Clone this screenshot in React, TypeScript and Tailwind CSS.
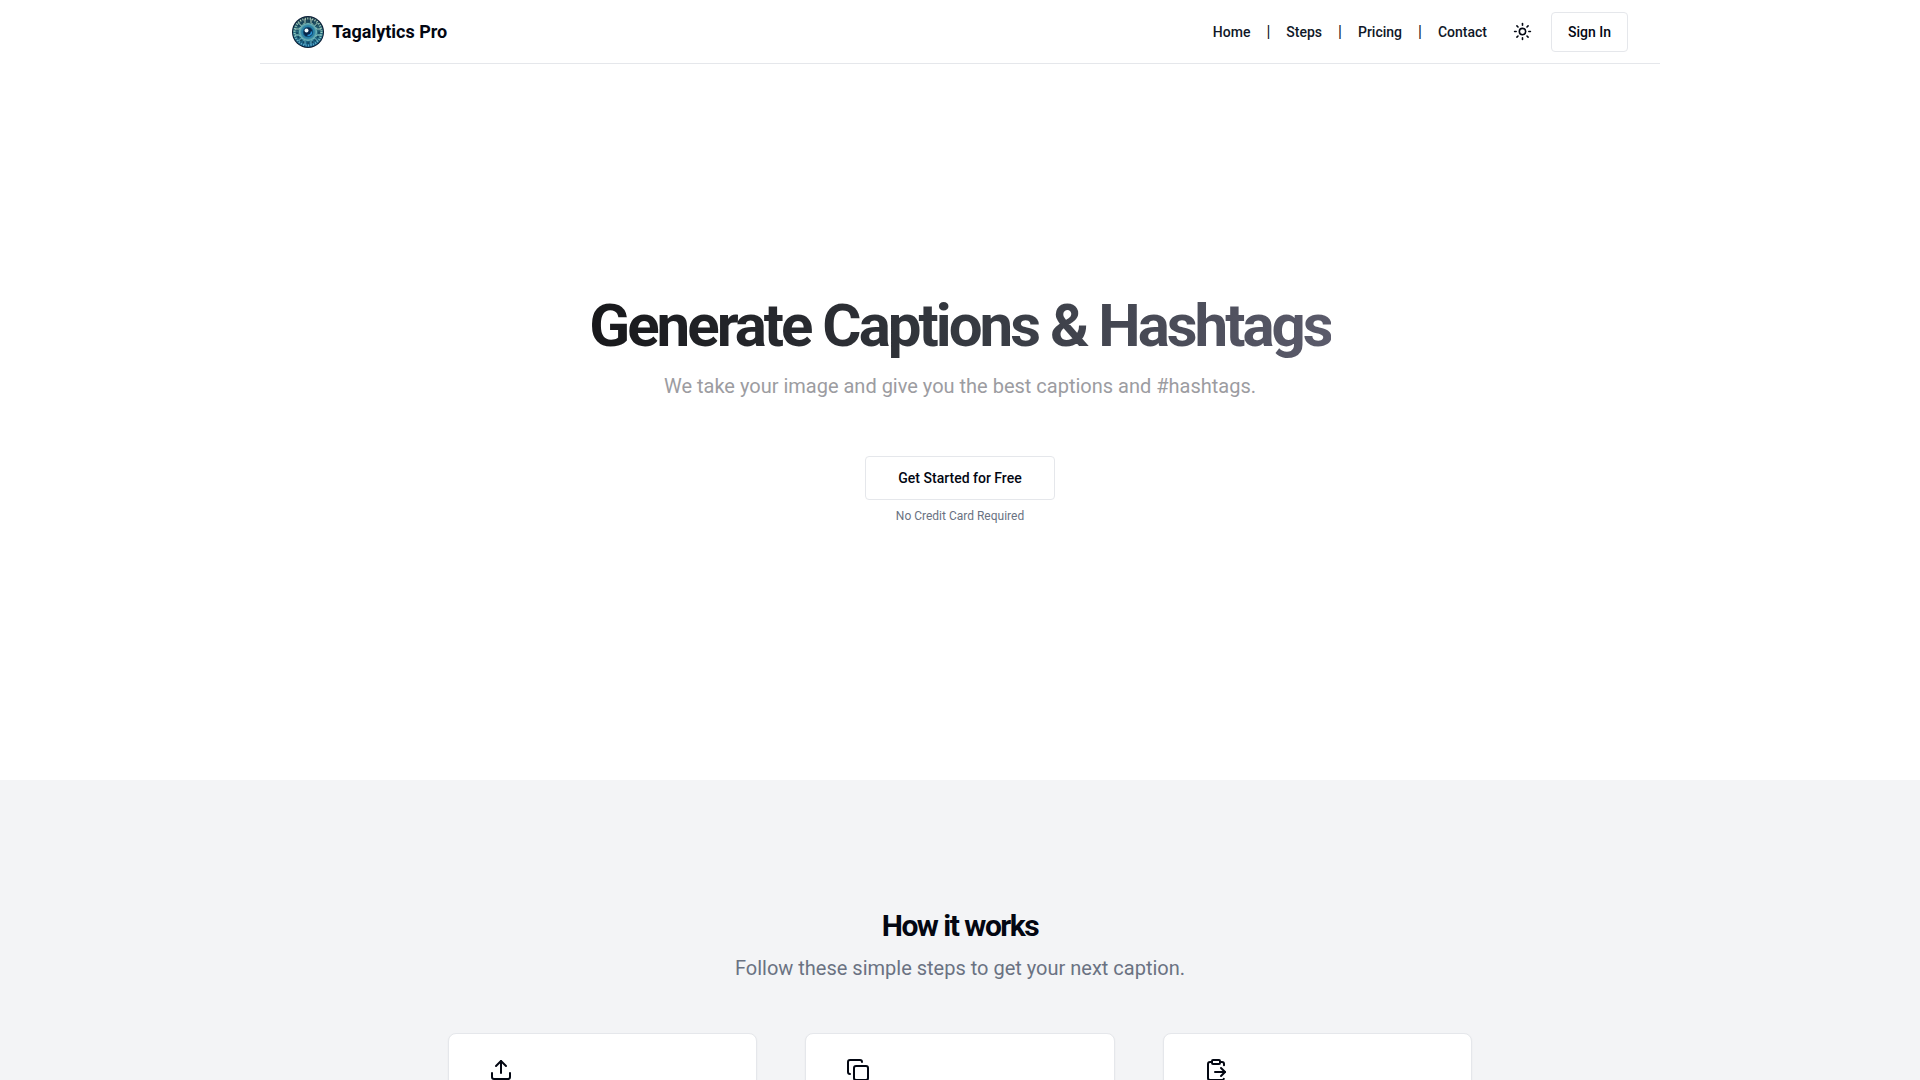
import React from 'react';
import { ClipboardPaste, Copy, Sun, Upload } from 'lucide-react';

const links = [
  { label: 'Home', href: '#home' },
  { label: 'Steps', href: '#steps' },
  { label: 'Pricing', href: '#pricing' },
  { label: 'Contact', href: '#contact' },
];

const steps = [
  { id: 'upload', icon: Upload },
  { id: 'copy', icon: Copy },
  { id: 'paste', icon: ClipboardPaste },
];

const Logo: React.FC = () => (
  <svg viewBox="0 0 64 64" className="size-8" aria-hidden="true">
    <defs>
      <linearGradient id="rim" x1="0" y1="0" x2="0" y2="1">
        <stop offset="0" stopColor="#1c3c4c" />
        <stop offset="0.5" stopColor="#2a6f80" />
        <stop offset="1" stopColor="#125a86" />
      </linearGradient>
      <linearGradient id="trace" gradientUnits="userSpaceOnUse" x1="0" y1="0" x2="0" y2="64">
        <stop offset="0" stopColor="#c3d8bf" />
        <stop offset="0.6" stopColor="#9ad0c4" />
        <stop offset="1" stopColor="#4aa3cf" />
      </linearGradient>
      <radialGradient id="iris">
        <stop offset="0" stopColor="#0b3350" />
        <stop offset="0.6" stopColor="#17668f" />
        <stop offset="1" stopColor="#7cc4c2" />
      </radialGradient>
    </defs>
    <circle cx="32" cy="32" r="32" fill="#0a1c33" />
    <circle cx="32" cy="32" r="30" fill="url(#rim)" />
    <circle cx="32" cy="32" r="27" fill="none" stroke="url(#trace)" strokeWidth="4" strokeDasharray="2 3" />
    <circle cx="32" cy="32" r="22" fill="none" stroke="#12405a" strokeWidth="3" strokeDasharray="4 4" />
    <g fill="none" stroke="url(#trace)" strokeWidth="2">
      <path d="M26 6v7l-4 4M38 6v7l4 4M26 58v-7l-4-4M38 58v-7l4-4" />
      <path d="M6 26h7l4-3M6 38h7l4 3M58 26h-7l-4-3M58 38h-7l-4 3" />
      <path d="M13 14l7 7M51 14l-7 7M13 50l7-7M51 50l-7-7" />
    </g>
    <circle cx="32" cy="32" r="18" fill="url(#iris)" />
    <circle cx="32" cy="32" r="12" fill="none" stroke="#2b8ab0" strokeWidth="2" />
    <circle cx="32" cy="32" r="9" fill="#08264a" />
    <path d="M31 39c5 0 8-3 8-8" fill="none" stroke="#2a93d6" strokeWidth="3" />
    <circle cx="29" cy="29" r="4" fill="#eefcff" />
  </svg>
);

const Header: React.FC = () => (
  <header className="w-full max-w-[1400px] mx-auto h-16 px-8 flex items-center justify-between border-b border-gray-200">
    <a href="#home" className="flex items-center gap-2">
      <Logo />
      <span className="text-lg font-bold">Tagalytics Pro</span>
    </a>
    <div className="flex items-center">
      <nav className="flex items-center gap-4 text-sm font-medium text-gray-900 mr-4">
        {links.map((link, idx) => (
          <React.Fragment key={link.label}>
            {idx > 0 && <span className="text-base font-normal">|</span>}
            <a href={link.href}>{link.label}</a>
          </React.Fragment>
        ))}
      </nav>
      <button type="button" aria-label="Toggle theme" className="size-10 mr-2 flex items-center justify-center">
        <Sun size={19} />
      </button>
      <button type="button" className="h-10 px-4 rounded border border-gray-200 text-sm font-medium">
        Sign In
      </button>
    </div>
  </header>
);

const Hero: React.FC = () => (
  <section id="home" className="flex flex-col items-center pt-[226px] pb-64 px-4 text-center">
    <h1 className="pb-2 text-6xl leading-[72px] font-bold tracking-tighter text-transparent bg-clip-text bg-linear-to-r from-[#18181b] via-[#353940] to-[#5b5b6b]">
      Generate Captions &amp; Hashtags
    </h1>
    <p className="text-xl leading-8 text-[#9c9ca1]">
      We take your image and give you the best captions and #hashtags.
    </p>
    <button type="button" className="mt-[54px] h-11 px-8 rounded border border-gray-200 text-sm font-medium">
      Get Started for Free
    </button>
    <p className="mt-2 text-xs text-gray-500">No Credit Card Required</p>
  </section>
);

const HowItWorks: React.FC = () => (
  <section id="steps" className="bg-gray-100 py-32 px-4">
    <div className="text-center">
      <h2 className="text-3xl font-bold tracking-tighter">How it works</h2>
      <p className="mt-2 text-xl leading-relaxed text-gray-500">Follow these simple steps to get your next caption.</p>
    </div>
    <div className="max-w-5xl mx-auto mt-12 grid grid-cols-3 gap-12">
      {steps.map(({ id, icon: Icon }) => (
        <div key={id} className="h-48 rounded-lg border border-gray-200 bg-white px-10 py-6 shadow-xs">
          <Icon size={24} />
        </div>
      ))}
    </div>
  </section>
);

const App: React.FC = () => {
  return (
    <div className="h-screen overflow-hidden bg-white text-gray-950 font-[Roboto,sans-serif]">
      <Header />
      <main>
        <Hero />
        <HowItWorks />
      </main>
    </div>
  );
};

export default App;
